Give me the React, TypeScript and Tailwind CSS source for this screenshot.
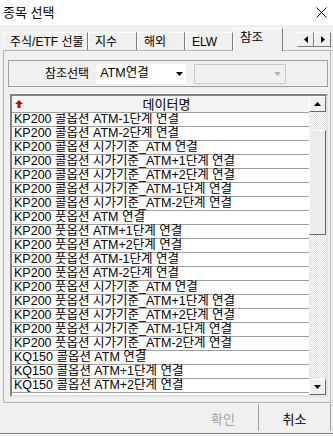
const tabs = [
  { label: "주식/ETF 선물", w: "w-[85px]" },
  { label: "지수", w: "w-[49px]" },
  { label: "해외", w: "w-[48px]" },
  { label: "ELW", w: "w-[48px]" },
];

const rows = [
  "KP200 콜옵션 ATM-1단계 연결",
  "KP200 콜옵션 ATM-2단계 연결",
  "KP200 콜옵션 시가기준_ATM 연결",
  "KP200 콜옵션 시가기준_ATM+1단계 연결",
  "KP200 콜옵션 시가기준_ATM+2단계 연결",
  "KP200 콜옵션 시가기준_ATM-1단계 연결",
  "KP200 콜옵션 시가기준_ATM-2단계 연결",
  "KP200 풋옵션 ATM 연결",
  "KP200 풋옵션 ATM+1단계 연결",
  "KP200 풋옵션 ATM+2단계 연결",
  "KP200 풋옵션 ATM-1단계 연결",
  "KP200 풋옵션 ATM-2단계 연결",
  "KP200 풋옵션 시가기준_ATM 연결",
  "KP200 풋옵션 시가기준_ATM+1단계 연결",
  "KP200 풋옵션 시가기준_ATM+2단계 연결",
  "KP200 풋옵션 시가기준_ATM-1단계 연결",
  "KP200 풋옵션 시가기준_ATM-2단계 연결",
  "KQ150 콜옵션 ATM 연결",
  "KQ150 콜옵션 ATM+1단계 연결",
  "KQ150 콜옵션 ATM+2단계 연결",
];

// small solid triangle used by combos, scrollbar and tab arrows
function Tri({ dir, color = "#000" }: { dir: "up" | "down" | "left" | "right"; color?: string }) {
  const points = {
    up: "0,4 7,4 3.5,0",
    down: "0,0 7,0 3.5,4",
    left: "4,0 4,7 0,3.5",
    right: "0,0 0,7 4,3.5",
  }[dir];
  const vertical = dir === "up" || dir === "down";
  return (
    <svg width={vertical ? 7 : 4} height={vertical ? 4 : 7} viewBox={vertical ? "0 0 7 4" : "0 0 4 7"}>
      <polygon points={points} fill={color} />
    </svg>
  );
}

const checker =
  "bg-[image:repeating-conic-gradient(#dcdcdc_0%_25%,#ffffff_0%_50%)] bg-[length:2px_2px]";

export default function App() {
  return (
    <div className="flex h-[436px] w-[333px] flex-col overflow-hidden bg-[#f0f0f0] font-['Liberation_Sans','Noto_Sans_CJK_KR',sans-serif] text-[12px] text-black">
      {/* title bar */}
      <div className="flex h-[25px] shrink-0 items-center justify-between bg-white pl-[3px] pr-[6px]">
        <span className="text-[13px] leading-none">종목 선택</span>
        <svg width="11" height="11" viewBox="0 0 11 11">
          <path d="M0.5 0.5L10.5 10.5M10.5 0.5L0.5 10.5" stroke="#000" strokeWidth="1" />
        </svg>
      </div>

      {/* tab strip */}
      <div className="flex h-[25px] shrink-0 items-end pl-[3px]">
        {tabs.map((tab) => (
          <div
            key={tab.label}
            className={`${tab.w} flex h-[18px] items-center border-t border-r border-l border-t-white border-r-[#7a7a7a] border-l-white pl-[6px] leading-none whitespace-nowrap`}
          >
            {tab.label}
          </div>
        ))}
        <div className="relative z-10 -mb-px flex h-[23px] w-[50px] items-start border-t border-r border-l border-t-white border-r-[#7a7a7a] border-l-white bg-[#f0f0f0] pt-[3px] pl-[6px] text-[12.5px] leading-none">
          참조
        </div>
        <div className="mr-[2px] mb-[3px] ml-auto flex h-[15px]">
          <div className="flex w-[17px] items-center justify-center border border-t-white border-r-[#7a7a7a] border-b-[#7a7a7a] border-l-white">
            <Tri dir="left" />
          </div>
          <div className="flex w-[17px] items-center justify-center border border-t-white border-r-[#7a7a7a] border-b-[#7a7a7a] border-l-white">
            <Tri dir="right" />
          </div>
        </div>
      </div>

      {/* tab panel */}
      <div className="ml-[3px] flex h-[353px] w-[328px] shrink-0 flex-col border border-[#b4b4b4] pt-[9px] pr-[2px] pb-[5px] pl-[4px]">
        <div className="flex h-[27px] shrink-0 items-center border border-[#a0a0a0] pl-[36px]">
          <span className="leading-none">참조선택</span>
          <div className="ml-[7px] flex h-[20px] w-[90px] items-center justify-between bg-white pr-[3px] pl-[4px]">
            <span className="text-[12.5px] leading-none">ATM연결</span>
            <Tri dir="down" />
          </div>
          <div className="ml-[8px] flex h-[20px] w-[92px] items-center justify-end border border-[#c8c8c8] pr-[4px]">
            <Tri dir="down" color="#b4b4b4" />
          </div>
        </div>

        {/* list */}
        <div className="mt-[7px] ml-[2px] flex h-[303px] shrink-0 border-2 border-t-[#828282] border-r-[#e3e3e3] border-b-[#e3e3e3] border-l-[#828282] bg-white">
          <div className="flex min-w-0 flex-1 flex-col">
            <div className="relative flex h-[17px] shrink-0 items-center justify-center border-b border-[#a0a0a0] bg-[#f4f4f4] pl-[12px]">
              <svg className="absolute top-[4px] left-[3px]" width="8" height="8" viewBox="0 0 8 8">
                <polygon points="4,0 8,4 5.5,4 5.5,8 2.5,8 2.5,4 0,4" fill="#d40000" />
              </svg>
              <span className="text-[13px] leading-none">데이터명</span>
            </div>
            {rows.map((row) => (
              <div
                key={row}
                className="flex h-[14px] shrink-0 items-center border-b border-[#a0a0a0] pl-[2px] text-[12.5px] leading-none whitespace-nowrap"
              >
                {row}
              </div>
            ))}
          </div>

          {/* scrollbar */}
          <div className="flex w-[17px] shrink-0 flex-col">
            <div className="flex h-[16px] shrink-0 items-center justify-center border border-t-white border-r-[#696969] border-b-[#696969] border-l-white bg-[#f0f0f0]">
              <Tri dir="up" />
            </div>
            <div className={`h-[18px] shrink-0 ${checker}`} />
            <div className="h-[105px] shrink-0 border border-t-white border-r-[#696969] border-b-[#696969] border-l-white bg-[#ececec]" />
            <div className={`flex-1 ${checker}`} />
            <div className="flex h-[16px] shrink-0 items-center justify-center border border-t-white border-r-[#696969] border-b-[#696969] border-l-white bg-[#f0f0f0]">
              <Tri dir="down" />
            </div>
          </div>
        </div>
      </div>

      {/* bottom buttons */}
      <div className="flex h-[30px] shrink-0 items-stretch justify-end pt-[1px] pr-[2px] pb-[2px]">
        <div className="flex w-[71px] items-center justify-center border-r border-[#a0a0a0] pt-[3px] text-[13px] leading-none text-[#a0a0a0]">
          확인
        </div>
        <div className="flex w-[72px] items-center justify-center border-r border-[#a0a0a0] pt-[3px] text-[13px] leading-none">
          취소
        </div>
      </div>
      <div className="h-px shrink-0 bg-[#808080]" />
    </div>
  );
}
